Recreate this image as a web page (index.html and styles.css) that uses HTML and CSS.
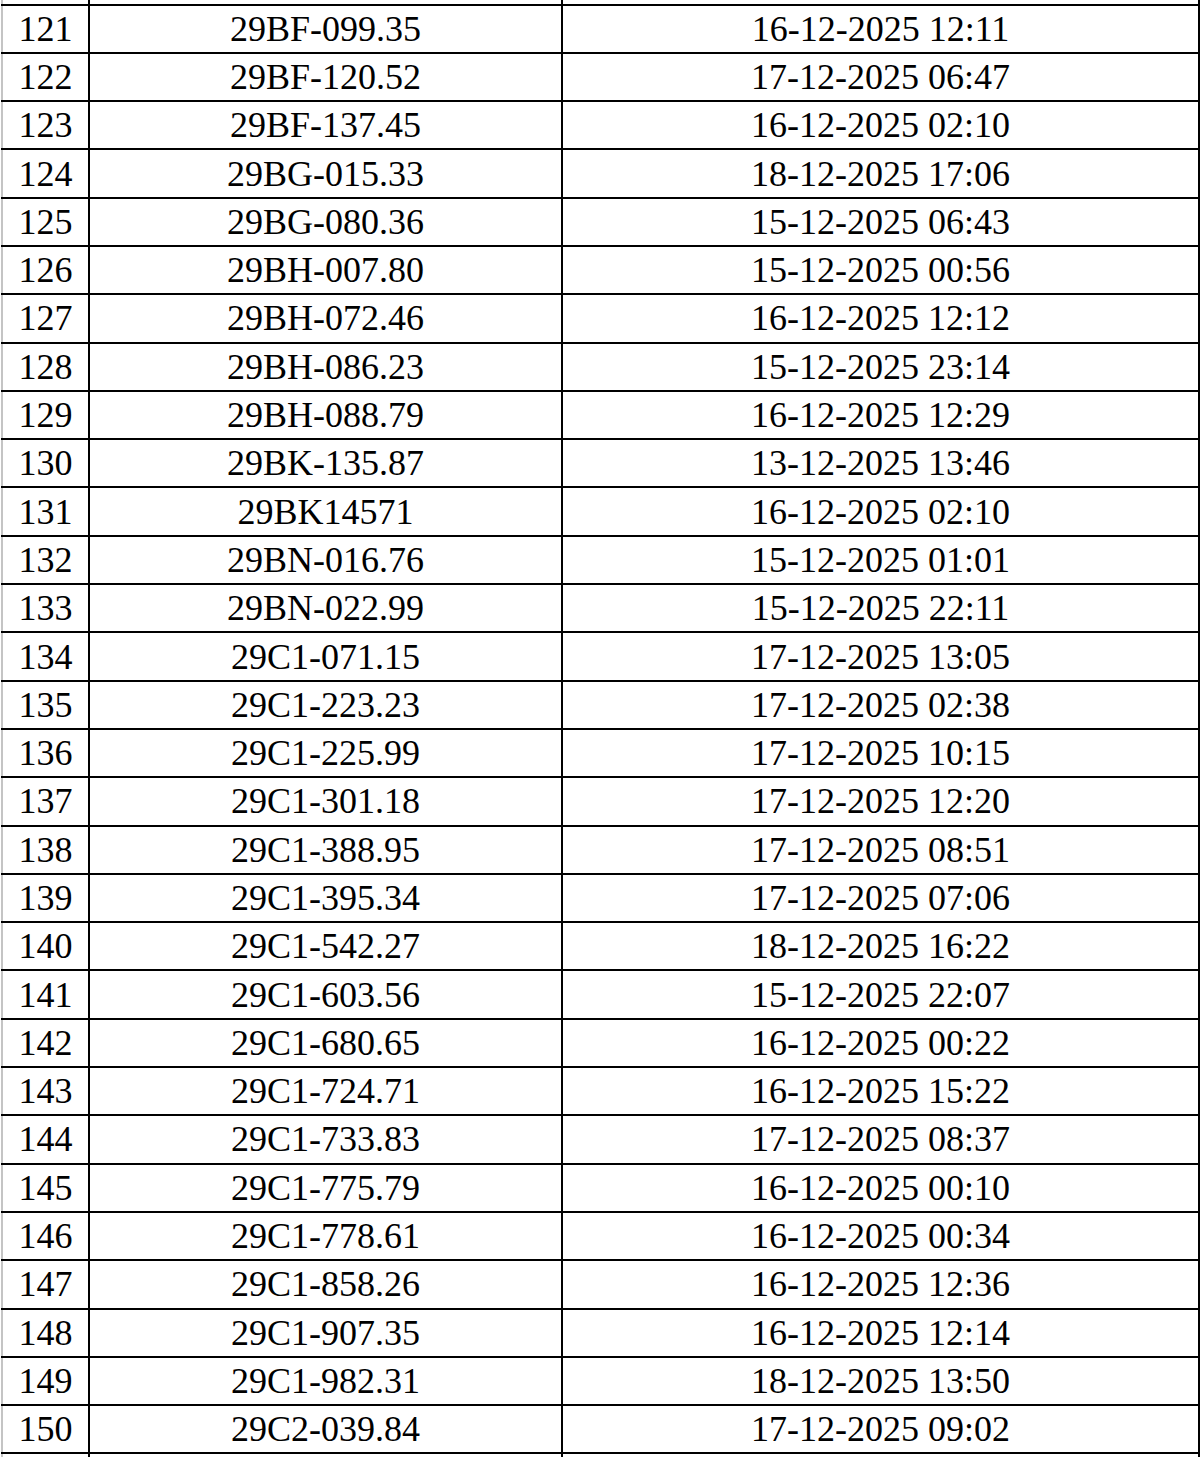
FILE: index.html
```html
<!DOCTYPE html>
<html>
<head>
<meta charset="utf-8">
<link rel="stylesheet" href="styles.css">
</head>
<body>
<div class="sheet">
<table class="grid">
<colgroup><col class="c-no"><col class="c-plate"><col class="c-time"></colgroup>
<tbody>
<tr class="stub"><td></td><td></td><td></td></tr>
<tr><td>121</td><td>29BF-099.35</td><td>16-12-2025 12:11</td></tr>
<tr><td>122</td><td>29BF-120.52</td><td>17-12-2025 06:47</td></tr>
<tr><td>123</td><td>29BF-137.45</td><td>16-12-2025 02:10</td></tr>
<tr><td>124</td><td>29BG-015.33</td><td>18-12-2025 17:06</td></tr>
<tr><td>125</td><td>29BG-080.36</td><td>15-12-2025 06:43</td></tr>
<tr><td>126</td><td>29BH-007.80</td><td>15-12-2025 00:56</td></tr>
<tr><td>127</td><td>29BH-072.46</td><td>16-12-2025 12:12</td></tr>
<tr><td>128</td><td>29BH-086.23</td><td>15-12-2025 23:14</td></tr>
<tr><td>129</td><td>29BH-088.79</td><td>16-12-2025 12:29</td></tr>
<tr><td>130</td><td>29BK-135.87</td><td>13-12-2025 13:46</td></tr>
<tr><td>131</td><td>29BK14571</td><td>16-12-2025 02:10</td></tr>
<tr><td>132</td><td>29BN-016.76</td><td>15-12-2025 01:01</td></tr>
<tr><td>133</td><td>29BN-022.99</td><td>15-12-2025 22:11</td></tr>
<tr><td>134</td><td>29C1-071.15</td><td>17-12-2025 13:05</td></tr>
<tr><td>135</td><td>29C1-223.23</td><td>17-12-2025 02:38</td></tr>
<tr><td>136</td><td>29C1-225.99</td><td>17-12-2025 10:15</td></tr>
<tr><td>137</td><td>29C1-301.18</td><td>17-12-2025 12:20</td></tr>
<tr><td>138</td><td>29C1-388.95</td><td>17-12-2025 08:51</td></tr>
<tr><td>139</td><td>29C1-395.34</td><td>17-12-2025 07:06</td></tr>
<tr><td>140</td><td>29C1-542.27</td><td>18-12-2025 16:22</td></tr>
<tr><td>141</td><td>29C1-603.56</td><td>15-12-2025 22:07</td></tr>
<tr><td>142</td><td>29C1-680.65</td><td>16-12-2025 00:22</td></tr>
<tr><td>143</td><td>29C1-724.71</td><td>16-12-2025 15:22</td></tr>
<tr><td>144</td><td>29C1-733.83</td><td>17-12-2025 08:37</td></tr>
<tr><td>145</td><td>29C1-775.79</td><td>16-12-2025 00:10</td></tr>
<tr><td>146</td><td>29C1-778.61</td><td>16-12-2025 00:34</td></tr>
<tr><td>147</td><td>29C1-858.26</td><td>16-12-2025 12:36</td></tr>
<tr><td>148</td><td>29C1-907.35</td><td>16-12-2025 12:14</td></tr>
<tr><td>149</td><td>29C1-982.31</td><td>18-12-2025 13:50</td></tr>
<tr><td>150</td><td>29C2-039.84</td><td>17-12-2025 09:02</td></tr>
<tr class="stub"><td></td><td></td><td></td></tr>
</tbody>
</table>
</div>
</body>
</html>
```
FILE: styles.css
```css
html, body {
  margin: 0;
  padding: 0;
  background: #ffffff;
}
.sheet {
  width: 1200px;
  height: 1457px;
  overflow: hidden;
}
.grid {
  border-collapse: collapse;
  table-layout: fixed;
  width: 1199px;
  margin-left: 1px;
  margin-top: -44.8px;
  font-family: "Liberation Serif", "Times New Roman", serif;
  font-size: 36px;
  color: #000;
}
.c-no { width: 87px; }
.c-plate { width: 473px; }
.c-time { width: 637px; }
.grid td {
  border: 2px solid #000;
  height: 48.3px;
  padding: 0;
  box-sizing: border-box;
  text-align: center;
  vertical-align: middle;
  line-height: 40px;
  white-space: nowrap;
}
.grid td:first-child {
  border-left-color: #c4c4c4;
}
.grid tr {
  height: 48.3px;
}
```
